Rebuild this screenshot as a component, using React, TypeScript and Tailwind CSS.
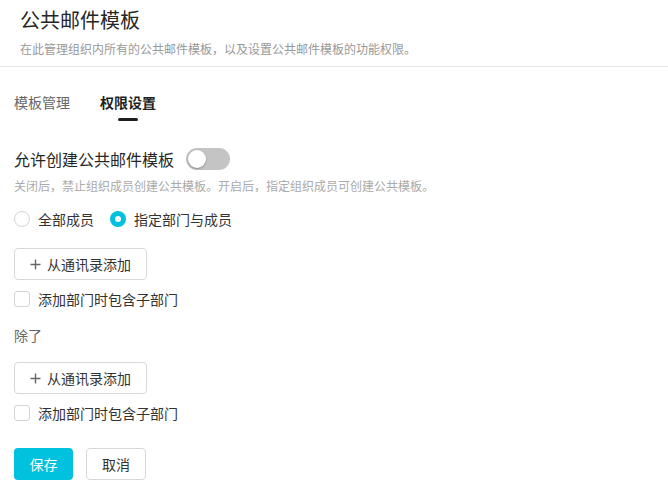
import React from "react";

const font = { fontFamily: '"Noto Sans CJK SC", "Noto Sans", sans-serif' };

function AddButton() {
  return (
    <button className="flex h-[32px] w-[133px] items-center justify-center gap-[6px] rounded-[4px] border border-[#d9d9d9] bg-white text-[14px] leading-[22px] text-[#333]">
      <svg width="11" height="11" viewBox="0 0 11 11" className="shrink-0">
        <path d="M5.5 0.5v10M0.5 5.5h10" stroke="#666" strokeWidth="1.4" />
      </svg>
      <span>从通讯录添加</span>
    </button>
  );
}

function CheckRow() {
  return (
    <div className="flex h-[22px] items-center gap-[8px]">
      <span className="block h-[16px] w-[16px] rounded-[3px] border border-[#d4d4d4] bg-white" />
      <span className="text-[14px] leading-[22px] text-[#333]">添加部门时包含子部门</span>
    </div>
  );
}

export default function App() {
  return (
    <div className="min-h-[488px] w-[668px] bg-white" style={font}>
      <div className="border-b border-[#e8e8e8] pb-[7px] pl-[20px] pt-[6px]">
        <div className="text-[20px] leading-[28px] text-[#262626]">公共邮件模板</div>
        <div className="mt-[5px] text-[12px] leading-[20px] text-[#999]">
          在此管理组织内所有的公共邮件模板，以及设置公共邮件模板的功能权限。
        </div>
      </div>

      <div className="px-[14px]">
        <div className="mt-[24px] flex gap-[30px]">
          <div className="text-[14px] leading-[22px] text-[#666]">模板管理</div>
          <div className="flex flex-col items-center">
            <div className="text-[14px] font-bold leading-[22px] text-[#1f1f1f]">权限设置</div>
            <div className="mt-[5px] h-[3px] w-[20px] rounded-full bg-[#1f1f1f]" />
          </div>
        </div>

        <div className="mt-[27px] flex h-[22px] items-center gap-[12px]">
          <span className="text-[16px] leading-[22px] text-[#262626]">允许创建公共邮件模板</span>
          <span className="relative block h-[22px] w-[44px] rounded-full bg-[#c4c4c4]">
            <span className="absolute left-[2px] top-[2px] block h-[18px] w-[18px] rounded-full bg-white shadow-[0_1px_2px_rgba(0,0,0,0.3)]" />
          </span>
        </div>

        <div className="mt-[6px] text-[12px] leading-[20px] text-[#aaa]">
          关闭后，禁止组织成员创建公共模板。开启后，指定组织成员可创建公共模板。
        </div>

        <div className="mt-[12px] flex h-[22px] items-center">
          <span className="block h-[16px] w-[16px] rounded-full border border-[#d4d4d4] bg-white" />
          <span className="ml-[8px] text-[14px] leading-[22px] text-[#333]">全部成员</span>
          <span className="ml-[16px] flex h-[16px] w-[16px] items-center justify-center rounded-full bg-[#00c1de]">
            <span className="block h-[6px] w-[6px] rounded-full bg-white" />
          </span>
          <span className="ml-[8px] text-[14px] leading-[22px] text-[#333]">指定部门与成员</span>
        </div>

        <div className="mt-[18px]">
          <AddButton />
        </div>
        <div className="mt-[8px]">
          <CheckRow />
        </div>

        <div className="mt-[14px] text-[14px] leading-[22px] text-[#666]">除了</div>

        <div className="mt-[16px]">
          <AddButton />
        </div>
        <div className="mt-[8px]">
          <CheckRow />
        </div>

        <div className="mt-[24px] flex gap-[13px]">
          <button className="h-[32px] w-[59px] rounded-[4px] bg-[#00c1de] text-[14px] text-white">保存</button>
          <button className="h-[32px] w-[60px] rounded-[4px] border border-[#d9d9d9] bg-white text-[14px] text-[#333]">取消</button>
        </div>
      </div>
    </div>
  );
}
